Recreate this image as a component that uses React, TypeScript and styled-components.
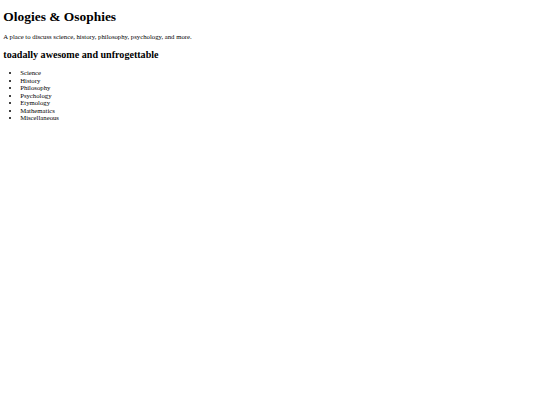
import {FC} from 'react'
import styled, {createGlobalStyle} from 'styled-components'

const GlobalStyle = createGlobalStyle`
    body {
        margin: 3.36px;
        font-family: "Liberation Serif", "Times New Roman", serif;
        font-size: 6.72px;
        color: #000;
        background: #fff;
    }
`

const Page = styled.main`
    display: block;
`

const Title = styled.h1`
    font-size: 13.44px;
    font-weight: bold;
    margin: 6px 0 8px;
`

const Tagline = styled.p`
    margin: 6.72px 0 8.7px;
`

const Subtitle = styled.h2`
    font-size: 10.08px;
    font-weight: bold;
    margin: 8.37px 0 9px;
`

const TopicList = styled.ul`
    list-style: disc;
    margin: 6.72px 0;
    padding-left: 16.8px;
`

const Topic = styled.li`
    line-height: 7.5px;
`

const topics = ['Science', 'History', 'Philosophy', 'Psychology', 'Etymology', 'Mathematics', 'Miscellaneous']

const App: FC = () => {
    return (
        <>
            <GlobalStyle />
            <Page>
                <Title>Ologies &amp; Osophies</Title>
                <Tagline>A place to discuss science, history, philosophy, psychology, and more.</Tagline>
                <Subtitle>toadally awesome and unfrogettable</Subtitle>
                <TopicList>
                    {topics.map(topic => <Topic key={topic}>{topic}</Topic>)}
                </TopicList>
            </Page>
        </>
    )
}

export default App
